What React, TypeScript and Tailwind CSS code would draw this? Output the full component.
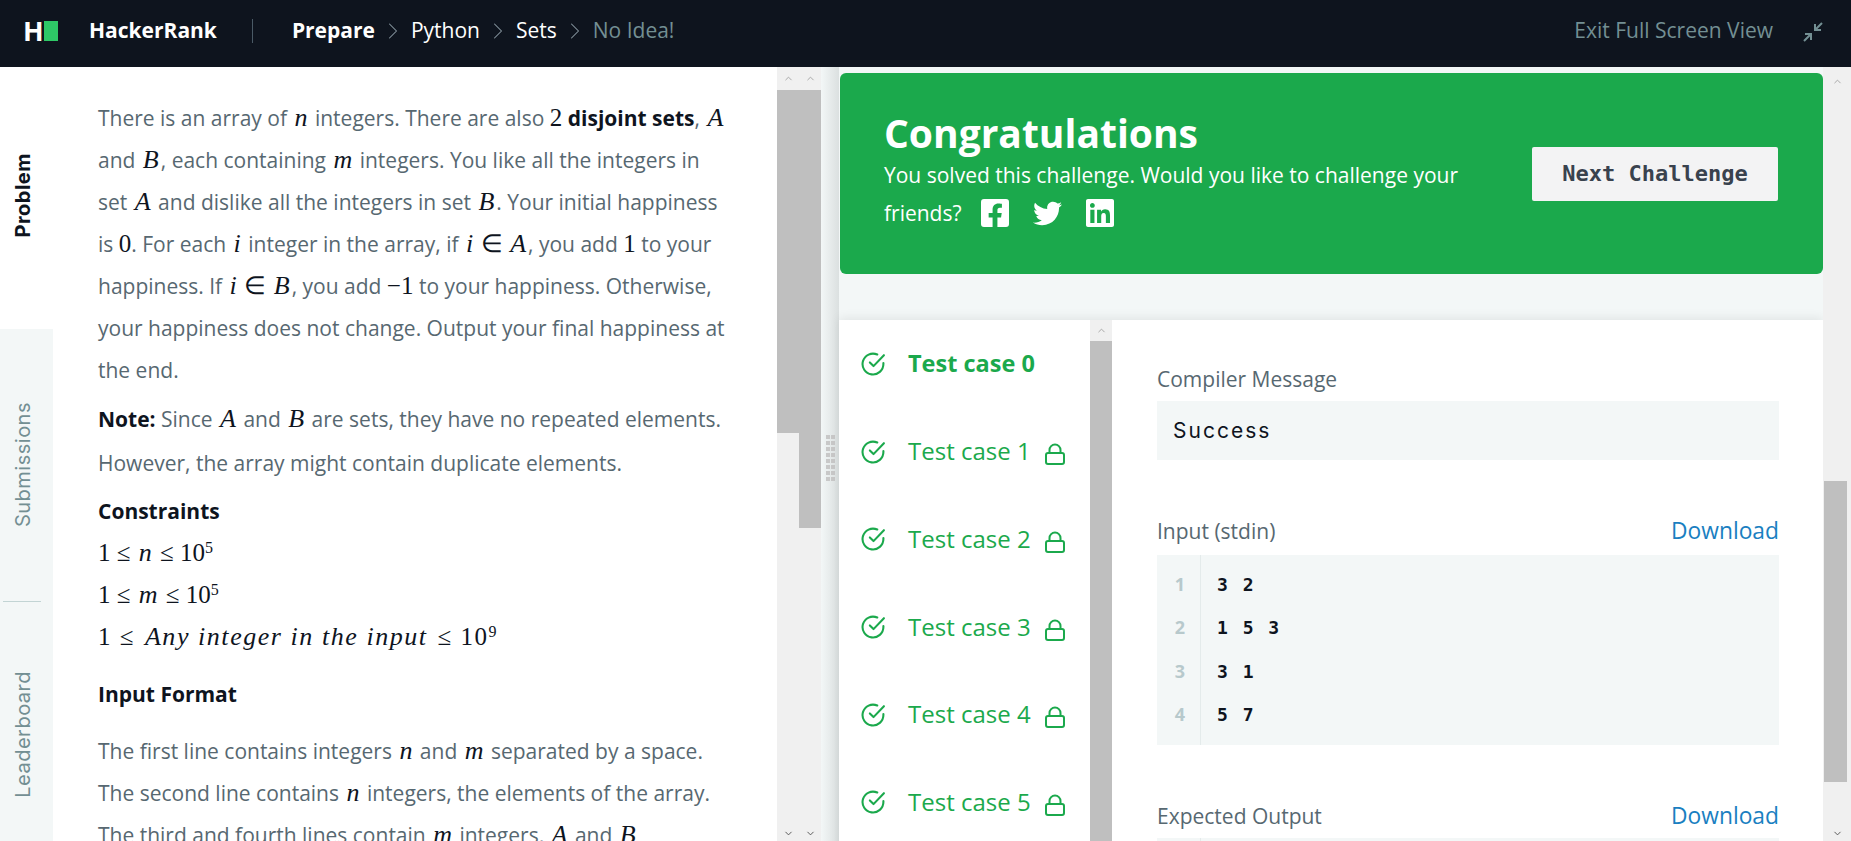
import { ChevronRight, ChevronUp, ChevronDown } from 'lucide-react';
import { FaFacebookSquare, FaLinkedin, FaTwitter } from 'react-icons/fa';

const M = ({ children }: { children: React.ReactNode }) => (
  <span className="mx-[2px] font-['Liberation_Serif',serif] italic text-[26px] leading-none text-[#0e141e]">{children}</span>
);

const N = ({ children }: { children: React.ReactNode }) => (
  <span className="font-['Liberation_Serif',serif] text-[25px] leading-none text-[#0e141e]">{children}</span>
);

const ScrollBar = ({ up = true }: { up?: boolean }) =>
  up ? <ChevronUp size={11} strokeWidth={2} className="text-[#a3a3a3]" /> : <ChevronDown size={11} strokeWidth={2} className="text-[#505050]" />;

const CheckIcon = () => (
  <svg width="25" height="25" viewBox="0 0 24 24" fill="none" stroke="#1ba94c" strokeWidth="2" strokeLinecap="round" strokeLinejoin="round">
    <path d="M21.5 11.5v1a10 10 0 1 1-5.9-9.1" />
    <path d="M22 4 12 14.5l-3.5-3.5" />
  </svg>
);

const LockIcon = () => (
  <svg className="absolute left-[137px] top-[10px]" width="20" height="22" viewBox="0 0 20 22" fill="none" stroke="#1ba94c" strokeWidth="2" strokeLinejoin="round">
    <rect x="1" y="10" width="18" height="11" rx="2" />
    <path d="M4.5 10V7a5.5 5.5 0 0 1 11 0v3" />
  </svg>
);

const TestCase = ({ n }: { n: number }) => (
  <div className="h-[87.6px] flex items-center pl-[22px] text-[#1ba94c]">
    <CheckIcon />
    <span className={`relative ml-[22px] ${n === 0 ? 'font-bold text-[23.5px]' : 'text-[24px]'}`}>
      Test case {n}
      {n > 0 && <LockIcon />}
    </span>
  </div>
);

const SideTab = ({ label, className }: { label: string; className: string }) => (
  <div className={`flex items-center justify-center ${className}`}>
    <span className="[writing-mode:vertical-rl] rotate-180 text-[20px] tracking-[0.5px] font-['Inter',sans-serif]">{label}</span>
  </div>
);

const Sep = () => <ChevronRight size={28} strokeWidth={0.9} className="mx-[4px] text-[#8a9aa3]" />;

export default function App() {
  const lines = ['3 2', '1 5 3', '3 1', '5 7'];

  return (
    <div className="w-[1851px] h-[841px] overflow-hidden flex flex-col font-['Open_Sans',sans-serif] bg-white">
      {/* Header */}
      <header className="h-[67px] shrink-0 bg-[#0e141e] flex items-center pb-[6px] text-white">
        <div className="ml-[23px] flex items-center h-[20px]">
          <span className="text-[27px] font-bold leading-none w-[18px]">H</span>
          <span className="ml-[3px] w-[14px] h-[20px] bg-[#2ec866]" />
        </div>
        <span className="ml-[31px] text-[21px] font-bold">HackerRank</span>
        <span className="ml-[35px] w-px h-[24px] bg-[#4a5a66]" />
        <div className="ml-[39px] flex items-center text-[21px]">
          <span className="font-bold">Prepare</span>
          <Sep />
          <span>Python</span>
          <Sep />
          <span>Sets</span>
          <Sep />
          <span className="text-[#738f93]">No Idea!</span>
        </div>
        <span className="ml-auto text-[21px] text-[#738f93]">Exit Full Screen View</span>
        <svg className="ml-[30px] mr-[28px] mt-[3px]" width="20" height="20" viewBox="0 0 20 20" fill="none" stroke="#738f93" strokeWidth="2">
          <path d="M19 1 12 8M12 2v6h6" />
          <path d="M1 19 8 12M2 12h6v6" />
        </svg>
      </header>

      <div className="flex-1 flex min-h-0">
        {/* Side tabs */}
        <div className="w-[53px] shrink-0 flex flex-col">
          <SideTab label="Problem" className="h-[262px] pb-[6px] pr-[7px] bg-white text-[#0e141e] font-bold" />
          <div className="flex-1 bg-[#f3f7f7] flex flex-col text-[#738f93]">
            <SideTab label="Submissions" className="h-[272px] pr-[7px]" />
            <div className="ml-[3px] mr-[12px] h-px bg-[#c2d4d4]" />
            <SideTab label="Leaderboard" className="flex-1 pt-[26px] pr-[7px]" />
          </div>
        </div>

        {/* Problem statement */}
        <div className="w-[724px] shrink-0 pl-[45px] pt-[30px] text-[21px] leading-[42px] text-[#576871] overflow-hidden whitespace-nowrap">
          <p>There is an array of <M>n</M> integers. There are also <N>2</N> <b className="font-bold text-[#0e141e]">disjoint sets</b>, <M>A</M></p>
          <p>and <M>B</M>, each containing <M>m</M> integers. You like all the integers in</p>
          <p>set <M>A</M> and dislike all the integers in set <M>B</M>. Your initial happiness</p>
          <p>is <N>0</N>. For each <M>i</M> integer in the array, if <M>i</M> <N>∈</N> <M>A</M>, you add <N>1</N> to your</p>
          <p>happiness. If <M>i</M> <N>∈</N> <M>B</M>, you add <N>−1</N> to your happiness. Otherwise,</p>
          <p>your happiness does not change. Output your final happiness at</p>
          <p>the end.</p>
          <p className="mt-[7px]"><b className="font-bold text-[#0e141e]">Note:</b> Since <M>A</M> and <M>B</M> are sets, they have no repeated elements.</p>
          <p className="mt-[2px]">However, the array might contain duplicate elements.</p>
          <p className="mt-[6px] font-bold text-[#0e141e]">Constraints</p>
          <p><N>1 ≤ </N><M>n</M><N> ≤ 10<sup className="text-[16px]">5</sup></N></p>
          <p><N>1 ≤ </N><M>m</M><N> ≤ 10<sup className="text-[16px]">5</sup></N></p>
          <p className="tracking-[1.55px]"><N>1 ≤ </N><M>Any integer in the input</M><N> ≤ 10<sup className="text-[16px]">9</sup></N></p>
          <p className="mt-[15px] font-bold text-[#0e141e]">Input Format</p>
          <p className="mt-[15px]">The first line contains integers <M>n</M> and <M>m</M> separated by a space.</p>
          <p>The second line contains <M>n</M> integers, the elements of the array.</p>
          <p>The third and fourth lines contain <M>m</M> integers, <M>A</M> and <M>B</M></p>
        </div>

        {/* Left scrollbars */}
        <div className="w-[22px] shrink-0 flex flex-col bg-[#f0f0f0]">
          <div className="h-[23px] flex items-center justify-center"><ScrollBar /></div>
          <div className="h-[343px] bg-[#bfbfbf]" />
          <div className="flex-1 flex items-end justify-center pb-[2px]"><ScrollBar up={false} /></div>
        </div>
        <div className="w-[22px] shrink-0 flex flex-col bg-[#f0f0f0]">
          <div className="h-[23px] flex items-center justify-center"><ScrollBar /></div>
          <div className="h-[438px] bg-[#bfbfbf]" />
          <div className="flex-1 flex items-end justify-center pb-[2px]"><ScrollBar up={false} /></div>
        </div>

        {/* Splitter */}
        <div className="w-[18px] shrink-0 bg-gradient-to-r from-[#f3f7f7] to-[#dbe0e0] flex items-center justify-center pt-[8px]">
          <div className="grid grid-cols-2 gap-x-[1px] gap-y-[2px]">
            {Array.from({ length: 16 }, (_, i) => (
              <span key={i} className="w-[4px] h-[4px] bg-[#c8c8c8]" />
            ))}
          </div>
        </div>

        {/* Results */}
        <div className="flex-1 min-w-0 flex bg-[#f3f7f7]">
          <div className="flex-1 min-w-0 pt-[6px]">
            <div className="h-[201px] ml-px rounded-[6px] bg-[#1ba94c] text-white flex items-center pl-[44px] pr-[45px]">
              <div className="flex-1 -mt-[5px]">
                <div className="text-[39px] font-bold leading-[46px]">Congratulations</div>
                <div className="text-[21px] leading-[38px]">
                  <div>You solved this challenge. Would you like to challenge your</div>
                  <div className="flex items-center">
                    friends?
                    <FaFacebookSquare size={32} className="ml-[17px]" />
                    <FaTwitter size={29} className="ml-[22px]" />
                    <FaLinkedin size={32} className="ml-[22px]" />
                  </div>
                </div>
              </div>
              <div className="w-[246px] h-[54px] rounded-[2px] bg-[#f3f3f4] text-[#39424e] flex items-center justify-center font-['DejaVu_Sans_Mono',monospace] font-bold text-[22px]">
                Next Challenge
              </div>
            </div>

            <div className="mt-[46px] h-[600px] bg-white shadow-[0_-2px_10px_rgba(0,0,0,0.08)] flex">
              <div className="w-[251px] shrink-0">
                {[0, 1, 2, 3, 4, 5].map((n) => (
                  <TestCase key={n} n={n} />
                ))}
              </div>
              <div className="w-[22px] shrink-0 flex flex-col bg-[#f0f0f0]">
                <div className="h-[21px] flex items-center justify-center"><ScrollBar /></div>
                <div className="flex-1 bg-[#bfbfbf]" />
              </div>

              <div className="flex-1 min-w-0 pl-[45px] pr-[44px] pt-[44px]">
                <div className="text-[21px] leading-[30px] text-[#576871]">Compiler Message</div>
                <div className="mt-[7px] h-[59px] bg-[#f3f7f7] flex items-center pl-[16px] font-['Inter',sans-serif] text-[21px] tracking-[2px] text-[#0e141e]">
                  Success
                </div>

                <div className="mt-[56px] flex justify-between items-end text-[21px] leading-[30px]">
                  <span className="text-[#576871]">Input (stdin)</span>
                  <span className="text-[22.8px] text-[#1a7fc1]">Download</span>
                </div>
                <div className="mt-[9px] h-[190px] bg-[#f3f7f7] flex">
                  <div className="w-[44px] shrink-0 border-r border-[#e4ebeb] pt-[8px]">
                    {lines.map((_, i) => (
                      <div key={i} className="h-[43.3px] flex items-center justify-center pl-[3px] text-[18px] font-bold text-[#b7c9cc]">{i + 1}</div>
                    ))}
                  </div>
                  <div className="pl-[16px] pt-[8px] font-['DejaVu_Sans_Mono',monospace] font-bold text-[18px] text-[#0e141e] whitespace-pre tracking-[2px]">
                    {lines.map((l) => (
                      <div key={l} className="h-[43.3px] flex items-center">{l}</div>
                    ))}
                  </div>
                </div>

                <div className="mt-[56px] flex justify-between items-end text-[21px] leading-[30px]">
                  <span className="text-[#576871]">Expected Output</span>
                  <span className="text-[22.8px] text-[#1a7fc1]">Download</span>
                </div>
                <div className="mt-[7px] h-[100px] bg-[#f3f7f7] flex">
                  <div className="w-[44px] shrink-0 border-r border-[#e4ebeb]" />
                </div>
              </div>
            </div>
          </div>

          {/* Page scrollbar */}
          <div className="w-[28px] shrink-0 flex flex-col bg-[#f0f0f0]">
            <div className="h-[22px] flex items-center justify-center pt-[6px]"><ScrollBar up /></div>
            <div className="h-[392px]" />
            <div className="h-[301px] ml-[1px] mr-[4px] bg-[#bfbfbf]" />
            <div className="flex-1 flex items-end justify-center pb-[2px]"><ScrollBar up={false} /></div>
          </div>
        </div>
      </div>
    </div>
  );
}
